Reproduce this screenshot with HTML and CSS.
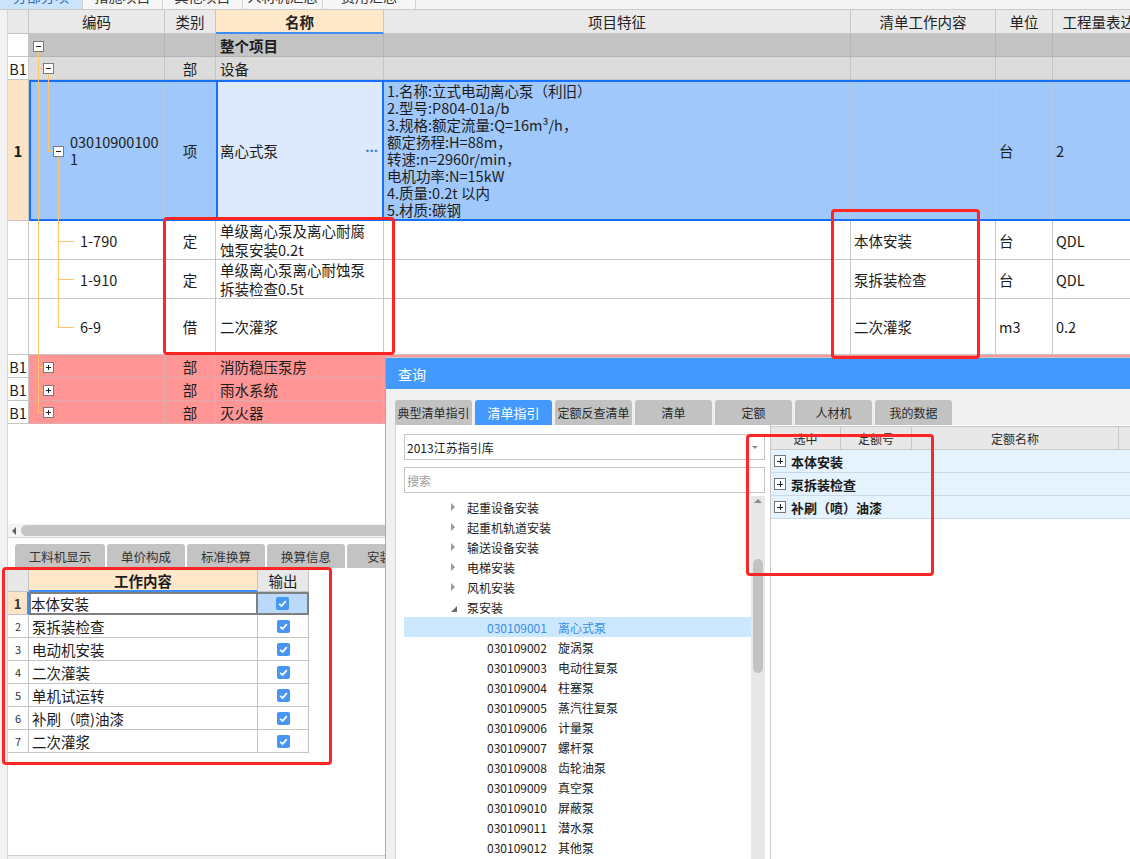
FILE: index.html
```html
<!DOCTYPE html>
<html lang="zh-CN">
<head>
<meta charset="utf-8">
<title>查询</title>
<link rel="stylesheet" href="styles.css">
</head>
<body>
<div class="toptabs">
  <div class="ttab on w82"><span>分部分项</span></div>
  <div class="ttab w80"><span>措施项目</span></div>
  <div class="ttab w80"><span>其他项目</span></div>
  <div class="ttab w80"><span>人材机汇总</span></div>
  <div class="ttab w93"><span>费用汇总</span></div>
</div>
<div class="workspace">
  <div class="gutter"></div>
  <div class="content">
    <div class="grid">
      <div class="row r1">
        <div class="c h"></div>
        <div class="c h">编码</div>
        <div class="c h">类别</div>
        <div class="c h hname">名称</div>
        <div class="c h">项目特征</div>
        <div class="c h">清单工作内容</div>
        <div class="c h">单位</div>
        <div class="c h">工程量表达式</div>
      </div>
      <div class="row r2 g1">
        <div class="c rn"></div>
        <div class="c"></div>
        <div class="c"></div>
        <div class="c nm b">整个项目</div>
        <div class="c"></div>
        <div class="c"></div>
        <div class="c"></div>
        <div class="c"></div>
      </div>
      <div class="row r3 g2">
        <div class="c rn">B1</div>
        <div class="c"></div>
        <div class="c ctr">部</div>
        <div class="c nm">设备</div>
        <div class="c"></div>
        <div class="c"></div>
        <div class="c"></div>
        <div class="c"></div>
      </div>
      <div class="row r4 sel">
        <div class="c rn cur">1</div>
        <div class="c code">03010900100<br>1</div>
        <div class="c ctr">项</div>
        <div class="c nm edit"><span>离心式泵</span><span class="dots">···</span></div>
        <div class="c feat">1.名称:立式电动离心泵（利旧）<br>2.型号:P804-01a/b<br>3.规格:额定流量:Q=16m³/h，<br>额定扬程:H=88m，<br>转速:n=2960r/min，<br>电机功率:N=15kW<br>4.质量:0.2t 以内<br>5.材质:碳钢</div>
        <div class="c"></div>
        <div class="c">台</div>
        <div class="c">2</div>
      </div>
      <div class="row r5">
        <div class="c rn"></div>
        <div class="c code2">1-790</div>
        <div class="c ctr">定</div>
        <div class="c nm two">单级离心泵及离心耐腐<br>蚀泵安装0.2t</div>
        <div class="c"></div>
        <div class="c">本体安装</div>
        <div class="c">台</div>
        <div class="c">QDL</div>
      </div>
      <div class="row r6">
        <div class="c rn"></div>
        <div class="c code2">1-910</div>
        <div class="c ctr">定</div>
        <div class="c nm two">单级离心泵离心耐蚀泵<br>拆装检查0.5t</div>
        <div class="c"></div>
        <div class="c">泵拆装检查</div>
        <div class="c">台</div>
        <div class="c">QDL</div>
      </div>
      <div class="row r7">
        <div class="c rn"></div>
        <div class="c code2">6-9</div>
        <div class="c ctr">借</div>
        <div class="c nm">二次灌浆</div>
        <div class="c"></div>
        <div class="c">二次灌浆</div>
        <div class="c">m3</div>
        <div class="c">0.2</div>
      </div>
      <div class="row r8 pk">
        <div class="c rn">B1</div>
        <div class="c"></div>
        <div class="c ctr">部</div>
        <div class="c nm">消防稳压泵房</div>
        <div class="c"></div><div class="c"></div><div class="c"></div><div class="c"></div>
      </div>
      <div class="row r9 pk">
        <div class="c rn">B1</div>
        <div class="c"></div>
        <div class="c ctr">部</div>
        <div class="c nm">雨水系统</div>
        <div class="c"></div><div class="c"></div><div class="c"></div><div class="c"></div>
      </div>
      <div class="row r10 pk">
        <div class="c rn">B1</div>
        <div class="c"></div>
        <div class="c ctr">部</div>
        <div class="c nm">灭火器</div>
        <div class="c"></div><div class="c"></div><div class="c"></div><div class="c"></div>
      </div>
      <div class="selframe"></div>
      <svg class="tree" width="136" height="390" viewBox="0 0 136 390">
        <g stroke="#ffc669" stroke-width="1" fill="none" shape-rendering="crispEdges">
          <path d="M9.5 18 V378.5"/>
          <path d="M10 34.5 H14"/>
          <path d="M19.5 40 V117.5 H24"/>
          <path d="M29.5 123 V293.5"/>
          <path d="M30 207.5 H45"/>
          <path d="M30 245.5 H45"/>
          <path d="M30 293.5 H45"/>
          <path d="M10 333.5 H14"/>
          <path d="M10 356.5 H14"/>
          <path d="M10 378.5 H14"/>
        </g>
        <g shape-rendering="crispEdges">
          <rect x="4.5" y="7.5" width="10" height="10" fill="#fff" stroke="#7a7a7a"/>
          <path d="M7 12.5 H12" stroke="#222"/>
          <rect x="14.5" y="29.5" width="10" height="10" fill="#fff" stroke="#7a7a7a"/>
          <path d="M17 34.5 H22" stroke="#222"/>
          <rect x="24.5" y="112.5" width="10" height="10" fill="#fff" stroke="#7a7a7a"/>
          <path d="M27 117.5 H32" stroke="#222"/>
          <rect x="14.5" y="328.5" width="10" height="10" fill="#fff" stroke="#7a7a7a"/>
          <path d="M17 333.5 H22 M19.5 331 V336" stroke="#222"/>
          <rect x="14.5" y="351.5" width="10" height="10" fill="#fff" stroke="#7a7a7a"/>
          <path d="M17 356.5 H22 M19.5 354 V359" stroke="#222"/>
          <rect x="14.5" y="373.5" width="10" height="10" fill="#fff" stroke="#7a7a7a"/>
          <path d="M17 378.5 H22 M19.5 376 V381" stroke="#222"/>
        </g>
      </svg>
    </div>
    <div class="blank"></div>
    <div class="hscroll"><i class="larr"></i><i class="hthumb"></i></div>
    <div class="subtabs">
      <div class="stab w90">工料机显示</div>
      <div class="stab">单价构成</div>
      <div class="stab">标准换算</div>
      <div class="stab">换算信息</div>
      <div class="stab w90">安装费用</div>
    </div>
    <div class="wtable">
      <div class="w wh"></div>
      <div class="w wh whname">工作内容</div>
      <div class="w wh">输出</div>

      <div class="w wn cur">1</div>
      <div class="w wt curt">本体安装</div>
      <div class="w wc curc"><svg class="cb" width="13" height="13" viewBox="0 0 13 13"><rect width="13" height="13" rx="2" fill="#4896f4"/><path d="M3.2 6.8 L5.6 9 L9.8 4.2" stroke="#fff" stroke-width="1.8" fill="none"/></svg></div>

      <div class="w wn">2</div>
      <div class="w wt">泵拆装检查</div>
      <div class="w wc"><svg class="cb" width="13" height="13" viewBox="0 0 13 13"><rect width="13" height="13" rx="2" fill="#4896f4"/><path d="M3.2 6.8 L5.6 9 L9.8 4.2" stroke="#fff" stroke-width="1.8" fill="none"/></svg></div>

      <div class="w wn">3</div>
      <div class="w wt">电动机安装</div>
      <div class="w wc"><svg class="cb" width="13" height="13" viewBox="0 0 13 13"><rect width="13" height="13" rx="2" fill="#4896f4"/><path d="M3.2 6.8 L5.6 9 L9.8 4.2" stroke="#fff" stroke-width="1.8" fill="none"/></svg></div>

      <div class="w wn">4</div>
      <div class="w wt">二次灌装</div>
      <div class="w wc"><svg class="cb" width="13" height="13" viewBox="0 0 13 13"><rect width="13" height="13" rx="2" fill="#4896f4"/><path d="M3.2 6.8 L5.6 9 L9.8 4.2" stroke="#fff" stroke-width="1.8" fill="none"/></svg></div>

      <div class="w wn">5</div>
      <div class="w wt">单机试运转</div>
      <div class="w wc"><svg class="cb" width="13" height="13" viewBox="0 0 13 13"><rect width="13" height="13" rx="2" fill="#4896f4"/><path d="M3.2 6.8 L5.6 9 L9.8 4.2" stroke="#fff" stroke-width="1.8" fill="none"/></svg></div>

      <div class="w wn">6</div>
      <div class="w wt">补刷（喷)油漆</div>
      <div class="w wc"><svg class="cb" width="13" height="13" viewBox="0 0 13 13"><rect width="13" height="13" rx="2" fill="#4896f4"/><path d="M3.2 6.8 L5.6 9 L9.8 4.2" stroke="#fff" stroke-width="1.8" fill="none"/></svg></div>

      <div class="w wn">7</div>
      <div class="w wt">二次灌浆</div>
      <div class="w wc"><svg class="cb" width="13" height="13" viewBox="0 0 13 13"><rect width="13" height="13" rx="2" fill="#4896f4"/><path d="M3.2 6.8 L5.6 9 L9.8 4.2" stroke="#fff" stroke-width="1.8" fill="none"/></svg></div>
    </div>
    <div class="filler"></div>
    <div class="footer"></div>
  </div>
</div>

<div class="dialog">
  <div class="dtitle">查询</div>
  <div class="dtabs">
    <div class="dtab">典型清单指引</div>
    <div class="dtab on">清单指引</div>
    <div class="dtab">定额反查清单</div>
    <div class="dtab">清单</div>
    <div class="dtab">定额</div>
    <div class="dtab">人材机</div>
    <div class="dtab">我的数据</div>
  </div>
  <div class="dpanes">
    <div class="lpane">
      <div class="selbox"><span>2013江苏指引库</span><i class="darr"></i></div>
      <div class="search">搜索</div>
      <div class="treebox">
        <div class="tlist">
          <div class="ti"><i class="arr"></i>起重设备安装</div>
          <div class="ti"><i class="arr"></i>起重机轨道安装</div>
          <div class="ti"><i class="arr"></i>输送设备安装</div>
          <div class="ti"><i class="arr"></i>电梯安装</div>
          <div class="ti"><i class="arr"></i>风机安装</div>
          <div class="ti"><i class="arr dn"></i>泵安装</div>
          <div class="ti leaf cur"><span class="cd">030109001</span>离心式泵</div>
          <div class="ti leaf"><span class="cd">030109002</span>旋涡泵</div>
          <div class="ti leaf"><span class="cd">030109003</span>电动往复泵</div>
          <div class="ti leaf"><span class="cd">030109004</span>柱塞泵</div>
          <div class="ti leaf"><span class="cd">030109005</span>蒸汽往复泵</div>
          <div class="ti leaf"><span class="cd">030109006</span>计量泵</div>
          <div class="ti leaf"><span class="cd">030109007</span>螺杆泵</div>
          <div class="ti leaf"><span class="cd">030109008</span>齿轮油泵</div>
          <div class="ti leaf"><span class="cd">030109009</span>真空泵</div>
          <div class="ti leaf"><span class="cd">030109010</span>屏蔽泵</div>
          <div class="ti leaf"><span class="cd">030109011</span>潜水泵</div>
          <div class="ti leaf"><span class="cd">030109012</span>其他泵</div>
        </div>
        <div class="vscroll"><i class="uarr"></i><i class="vthumb"></i></div>
      </div>
    </div>
    <div class="rpane">
      <div class="rhead">
        <div class="rh c1">选中</div>
        <div class="rh c2">定额号</div>
        <div class="rh c3">定额名称</div>
        <div class="rh c4"></div>
      </div>
      <div class="rrow"><svg width="12" height="12" viewBox="0 0 12 12" shape-rendering="crispEdges"><rect x="0.5" y="0.5" width="11" height="11" fill="#fff" stroke="#777"/><path d="M3 6.5 H9 M6.5 3 V9" stroke="#222"/></svg><span>本体安装</span></div>
      <div class="rrow"><svg width="12" height="12" viewBox="0 0 12 12" shape-rendering="crispEdges"><rect x="0.5" y="0.5" width="11" height="11" fill="#fff" stroke="#777"/><path d="M3 6.5 H9 M6.5 3 V9" stroke="#222"/></svg><span>泵拆装检查</span></div>
      <div class="rrow"><svg width="12" height="12" viewBox="0 0 12 12" shape-rendering="crispEdges"><rect x="0.5" y="0.5" width="11" height="11" fill="#fff" stroke="#777"/><path d="M3 6.5 H9 M6.5 3 V9" stroke="#222"/></svg><span>补刷（喷）油漆</span></div>
    </div>
  </div>
</div>

<div class="mark m1"></div>
<div class="mark m2"></div>
<div class="mark m3"></div>
<div class="mark m4"></div>
</body>
</html>
```

FILE: styles.css
```css
* { box-sizing: border-box; }
html, body { margin: 0; padding: 0; }
body {
  width: 1130px;
  height: 859px;
  overflow: hidden;
  position: relative;
  background: #fff;
  font-family: "Noto Sans CJK SC", "Noto Sans", sans-serif;
  color: #1c1c1c;
}

/* top tab strip (cut off) */
.toptabs {
  height: 10px;
  display: flex;
  background: #f4f4f4;
  border-bottom: 1px solid #c9c9c9;
  overflow: hidden;
}
.ttab {
  height: 9px;
  overflow: hidden;
  background: #f7f7f7;
  border-right: 1px solid #d2d2d2;
  text-align: center;
  font-size: 14px;
  line-height: 14px;
  color: #333;
}
.ttab span { display: block; margin-top: -11px; }
.ttab.on { background: #cbe3fb; color: #3d6fae; }
.w82 { width: 83px; }
.w80 { width: 80px; }
.w93 { width: 93px; }

.workspace { display: flex; height: 849px; }
.gutter { width: 8px; flex: none; background: #f2f2f2; border-right: 1px solid #d6d6d6; }
.content { flex: 1; min-width: 0; display: flex; flex-direction: column; overflow: hidden; }

/* main grid */
.grid {
  display: grid;
  grid-template-columns: 21px 136px 51px 168px 467px 145px 57px 107px;
  grid-template-rows: 24px 23px 23px 141px 39px 39px 56px 23px 23px 23px;
  font-size: 14.5px;
  flex: none;
}
.row { display: contents; }
.row > :nth-child(1) { grid-column: 1; }
.row > :nth-child(2) { grid-column: 2; }
.row > :nth-child(3) { grid-column: 3; }
.row > :nth-child(4) { grid-column: 4; }
.row > :nth-child(5) { grid-column: 5; }
.row > :nth-child(6) { grid-column: 6; }
.row > :nth-child(7) { grid-column: 7; }
.row > :nth-child(8) { grid-column: 8; }
.r1 > * { grid-row: 1; }
.r2 > * { grid-row: 2; }
.r3 > * { grid-row: 3; }
.r4 > * { grid-row: 4; }
.r5 > * { grid-row: 5; }
.r6 > * { grid-row: 6; }
.r7 > * { grid-row: 7; }
.r8 > * { grid-row: 8; }
.r9 > * { grid-row: 9; }
.r10 > * { grid-row: 10; }

.c {
  display: flex;
  align-items: center;
  white-space: nowrap;
  overflow: hidden;
  padding-left: 3px;
  border-right: 1px solid #c6c6c6;
  border-bottom: 1px solid #c6c6c6;
}
.h { background: #e9e9e9; justify-content: center; padding: 0; color: #222; }
.hname { background: #fee8c9; font-weight: bold; border-bottom: 2px solid #3d8ef5; }
.g1 > .c { background: #c4c4c4; border-color: #b4b4b4; }
.g2 > .c { background: #dcdcdc; border-color: #c4c4c4; }
.sel > .c { background: #a0c8fb; border-color: #b7c9df; }
.pk > .c { background: #ff9595; border-color: #e0aaaa; }
.row > .rn { background: #fff; justify-content: center; padding: 0; border-color: #c6c6c6; }
.row > .rn.cur { background: #fde4c6; font-weight: bold; font-size: 15px; }
.ctr { justify-content: center; padding: 0; }
.b { font-weight: bold; }
.code { padding-left: 41px; line-height: 17px; }
.code2 { padding-left: 51px; }
.nm { padding-left: 4px; }
.two { line-height: 19px; }
.sel > .edit {
  background: #dde9fd;
  border-left: 2px solid #1670ff;
  border-right: 2px solid #1670ff;
  padding-left: 2px;
  padding-right: 4px;
  justify-content: space-between;
}
.dots {
  font-family: "Noto Sans", "DejaVu Sans", sans-serif;
  font-size: 15px;
  color: #3b7fd9;
  font-weight: bold;
  letter-spacing: 0;
}
.feat { line-height: 17px; padding-left: 3px; }

.selframe {
  grid-column: 2 / 9;
  grid-row: 4;
  border: 2px solid #1670ff;
  pointer-events: none;
}
.tree { grid-column: 2; grid-row: 2 / 11; pointer-events: none; display: block; }

/* blank + scrollbar */
.blank { height: 100px; flex: none; }
.hscroll {
  height: 14px;
  flex: none;
  display: flex;
  align-items: flex-start;
  background: #f4f4f4;
  border-bottom: 1px solid #d2d2d2;
}
.larr {
  width: 0; height: 0;
  margin: 3px 4px 0 4px;
  border-right: 4px solid #606060;
  border-top: 4px solid transparent;
  border-bottom: 4px solid transparent;
}
.hthumb {
  margin-top: 1px;
  margin-left: 1px;
  flex: 1;
  height: 11px;
  border-radius: 6px 0 0 6px;
  background: #c6c6c6;
}

/* sub tabs */
.subtabs {
  margin-top: 6px;
  height: 24px;
  flex: none;
  display: flex;
  gap: 2px;
  padding-left: 7px;
}
.stab {
  width: 78px;
  flex: none;
  background: #c3c3c3;
  border-radius: 3px 3px 0 0;
  font-size: 12.5px;
  color: #333;
  display: flex;
  align-items: center;
  justify-content: center;
}
.stab.w90 { width: 90px; }

/* work content table */
.wtable {
  margin-top: 2px;
  display: grid;
  grid-template-columns: 21px 229px 51px;
  grid-template-rows: 22px repeat(7, 23px);
  width: 301px;
  flex: none;
  font-size: 14.5px;
}
.w {
  display: flex;
  align-items: center;
  white-space: nowrap;
  overflow: hidden;
  border-right: 1px solid #c4c4c4;
  border-bottom: 1px solid #c4c4c4;
  background: #fff;
}
.wh { background: #e8e8e8; justify-content: center; }
.whname { background: #fee8c9; font-weight: bold; border-bottom: 2px solid #3d8ef5; }
.wn { justify-content: center; font-size: 11px; color: #333; }
.wn.cur { background: #fde4c6; font-weight: bold; font-size: 13px; border-right: 2px solid #3d8ef5; }
.wt { padding-left: 3px; }
.wt.curt { border: 2px solid #7f7f7f; padding-left: 0; }
.wc { justify-content: center; }
.wc.curc { background: #bad9fb; border: 2px solid #7f7f7f; border-left: 0; }
.cb { display: block; }

.filler { flex: 1; }
.footer { height: 4px; flex: none; background: #f0f0f0; border-top: 1px solid #d0d0d0; }

/* query dialog */
.dialog {
  position: absolute;
  left: 385px;
  top: 357px;
  width: 745px;
  height: 502px;
  background: #f0f0f0;
  border-left: 1px solid #a9a9a9;
  border-top: 1px solid #c8c8c8;
  display: flex;
  flex-direction: column;
  overflow: hidden;
}
.dtitle {
  height: 31px;
  flex: none;
  background: #4499ff;
  color: #fff;
  font-size: 14px;
  padding-left: 12px;
  display: flex;
  align-items: center;
}
.dtabs {
  margin-top: 11px;
  height: 25px;
  flex: none;
  display: flex;
  gap: 3px;
  padding-left: 9px;
}
.dtab {
  width: 77px;
  flex: none;
  background: #c2c2c2;
  border-radius: 3px 3px 0 0;
  font-size: 12px;
  color: #2a2a2a;
  display: flex;
  align-items: center;
  justify-content: center;
  white-space: nowrap;
}
.dtab.on { background: #4499ff; color: #fff; font-size: 13px; }
.dpanes { flex: 1; display: flex; min-height: 0; padding-left: 9px; }
.lpane {
  width: 376px;
  flex: none;
  background: #fff;
  border-left: 1px solid #d2d2d2;
  border-right: 1px solid #c8c8c8;
  padding: 9px 0 0 8px;
  display: flex;
  flex-direction: column;
}
.selbox {
  width: 361px;
  height: 26px;
  flex: none;
  border: 1px solid #c6c6c6;
  font-size: 12px;
  color: #1c1c1c;
  display: flex;
  align-items: center;
  justify-content: space-between;
  padding: 0 6px 0 2px;
}
.darr {
  width: 0; height: 0;
  border-top: 3px solid #8a8a8a;
  border-left: 3px solid transparent;
  border-right: 3px solid transparent;
}
.search {
  margin-top: 7px;
  width: 361px;
  height: 26px;
  flex: none;
  border: 1px solid #c6c6c6;
  font-size: 12px;
  color: #a0a0a0;
  display: flex;
  align-items: center;
  padding-left: 2px;
}
.treebox { margin-top: 3px; flex: 1; display: flex; width: 361px; min-height: 0; }
.tlist { width: 347px; flex: none; padding-top: 1px; font-size: 12px; color: #1c1c1c; }
.ti { height: 20px; display: flex; align-items: center; padding-left: 47px; white-space: nowrap; }
.arr {
  width: 0; height: 0;
  margin-right: 12px;
  border-left: 4px solid #9a9a9a;
  border-top: 4px solid transparent;
  border-bottom: 4px solid transparent;
}
.arr.dn {
  margin-right: 10px;
  margin-top: 4px;
  border-left: 6px solid transparent;
  border-top: 0;
  border-bottom: 6px solid #6a6a6a;
}
.ti.leaf { padding-left: 83px; }
.cd { display: inline-block; width: 71px; }
.ti.cur { background: #cce8ff; color: #3a8ee8; }
.vscroll {
  width: 14px;
  flex: none;
  background: #e8e8e8;
  display: flex;
  flex-direction: column;
  align-items: center;
}
.uarr {
  margin-top: 3px;
  width: 0; height: 0;
  border-bottom: 4px solid #8a8a8a;
  border-left: 4px solid transparent;
  border-right: 4px solid transparent;
}
.vthumb {
  margin-top: 56px;
  width: 10px;
  height: 114px;
  border-radius: 5px;
  background: #c2c2c2;
}
.rpane { flex: 1; background: #fff; padding-top: 1px; }
.rhead { height: 24px; display: flex; background: #e8e8e8; border-top: 1px solid #c8c8c8; border-bottom: 1px solid #c8c8c8; }
.rh {
  flex: none;
  font-size: 12px;
  color: #2a2a2a;
  display: flex;
  align-items: center;
  justify-content: center;
  border-right: 1px solid #c8c8c8;
}
.c1 { width: 70px; }
.c2 { width: 71px; }
.c3 { width: 207px; }
.c4 { width: 20px; }
.rrow {
  height: 23px;
  background: #e5f3ff;
  border-bottom: 1px solid #c9d9ea;
  display: flex;
  align-items: center;
  padding-left: 3px;
  gap: 5px;
  font-size: 13px;
  font-weight: bold;
  color: #1a1a1a;
}
.rrow svg { display: block; }

/* red annotation rectangles */
.mark {
  position: absolute;
  border: 3px solid #ff2525;
  border-radius: 4px;
  pointer-events: none;
}
.m1 { left: 163px; top: 217px; width: 232px; height: 138px; }
.m2 { left: 831px; top: 209px; width: 149px; height: 150px; }
.m3 { left: 746px; top: 434px; width: 188px; height: 142px; }
.m4 { left: 2px; top: 567px; width: 330px; height: 198px; }
```
